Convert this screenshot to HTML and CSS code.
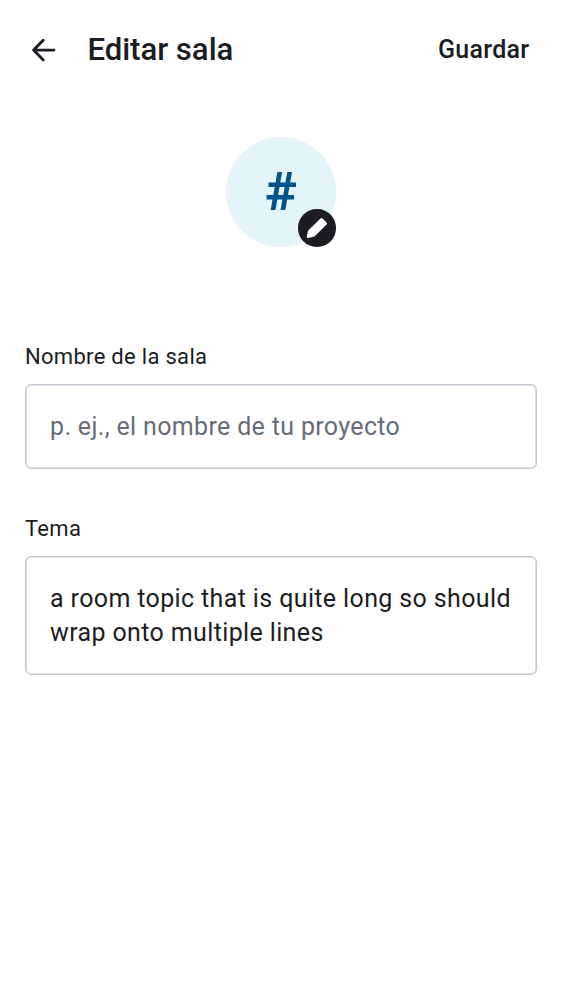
FILE: index.html
```html
<!DOCTYPE html>
<html lang="es">
<head>
<meta charset="utf-8">
<title>Editar sala</title>
<link rel="stylesheet" href="styles.css">
</head>
<body>
<header class="top-bar">
  <button class="back" aria-label="Atrás"><svg viewBox="0 0 31 31"><path d="M15.2 5.2L5.6 15.1L15.2 25M5.6 15.1H26"/></svg></button>
  <h1 class="title">Editar sala</h1>
  <button class="save">Guardar</button>
</header>
<main class="content">
  <div class="avatar"><span class="initial">#</span>
    <span class="edit-badge"><svg viewBox="0 0 24 24"><path d="M1.8 20.6l1.1-5.3a2 2 0 0 1 .55-1L15.5 2.6a1.5 1.5 0 0 1 2.1 0l4 3.9a1.5 1.5 0 0 1 0 2.1L9.7 20.2a2 2 0 0 1-1 .55L3.2 22c-1 .2-1.6-.4-1.4-1.4z"/></svg></span>
  </div>
  <label class="label">Nombre de la sala</label>
  <div class="field placeholder">p. ej., el nombre de tu proyecto</div>
  <label class="label">Tema</label>
  <div class="field">a room topic that is quite long so should wrap onto multiple lines</div>
</main>
</body>
</html>
```
FILE: styles.css
```css
* { box-sizing: border-box; }
body { margin: 0; background: #fff; color: #1b1d22; font-family: Roboto, sans-serif; }
button { border: 0; padding: 0; background: none; color: inherit; font: inherit; }
.top-bar { display: flex; align-items: center; height: 100px; padding: 0 32.5px 0 28px; }
.back { width: 31px; height: 31px; }
.back svg { display: block; width: 31px; height: 31px; fill: none; stroke: currentColor; stroke-width: 2.9; stroke-linecap: round; stroke-linejoin: round; }
.title { flex: 1; margin: 0 0 0 28.4px; font-size: 31.2px; font-weight: 500; letter-spacing: -.05px; line-height: 40px; }
.save { font-size: 25px; font-weight: 500; letter-spacing: .3px; line-height: 32px; }
.content { display: flex; flex-direction: column; padding: 37.3px 25px 0; }
.avatar { position: relative; display: grid; place-items: center; align-self: center; width: 109.4px; height: 109.4px; margin-bottom: 97.3px; border-radius: 50%; background: #e3f5f8; color: #00548c; }
.initial { font-size: 54px; font-weight: 700; line-height: 60px; }
.edit-badge { position: absolute; right: 0; bottom: 0; display: grid; place-items: center; width: 37.5px; height: 37.5px; border-radius: 50%; background: #1b1d22; }
.edit-badge svg { width: 24px; height: 24px; fill: #fff; }
.label { margin-bottom: 14px; font-size: 22px; letter-spacing: .3px; line-height: 26px; }
.field { margin-bottom: 47px; padding: 25px 24px 24px; border: 1px solid #c0c6d0; border-radius: 6px; box-shadow: inset 0 0 0 .6px #c0c6d0; font-size: 25px; letter-spacing: .37px; line-height: 34px; }
.placeholder { color: #656d77; letter-spacing: .34px; }
```
